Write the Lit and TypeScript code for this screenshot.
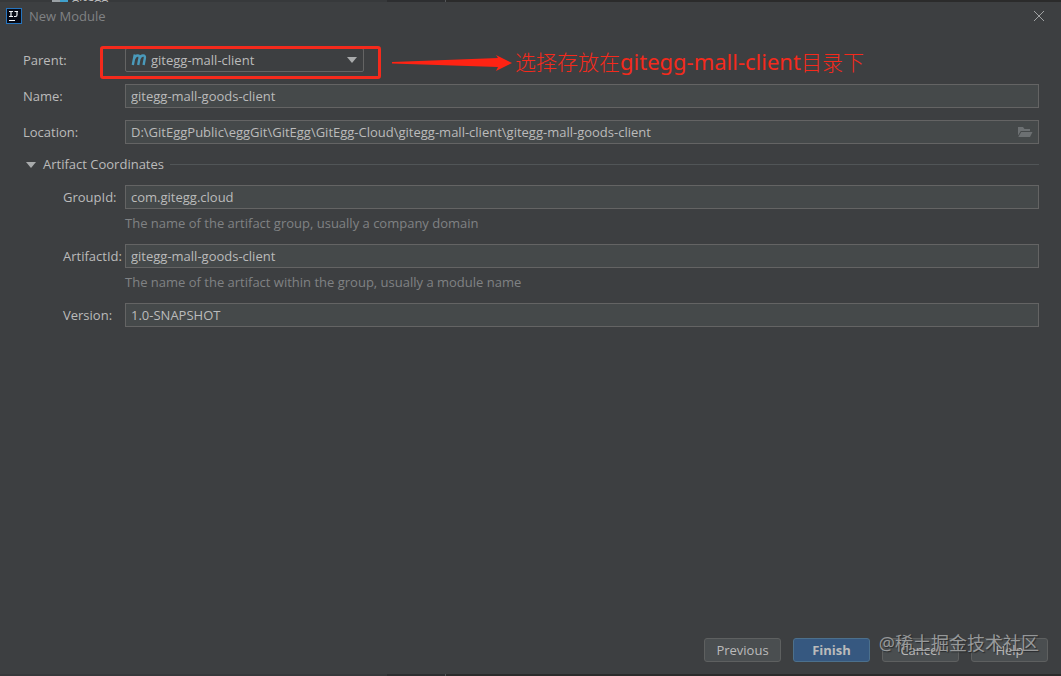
import { LitElement, html, css } from "lit";
import { customElement, property, state } from "lit/decorators.js";

@customElement("form-row")
class FormRow extends LitElement {
  @property() label = "";
  @property() value = "";
  @property() hint = "";
  @property({ type: Boolean }) nested = false;
  @property({ type: Boolean }) browse = false;

  static styles = css`
    :host { display: block; }
    .row { display: grid; grid-template-columns: 102px 1fr; align-items: center; }
    .nested { padding-left: 40px; grid-template-columns: 62px 1fr; }
    label { white-space: nowrap; }
    .field {
      display: flex; align-items: center; box-sizing: border-box; height: 24px;
      background: #45494a; border: 1px solid #646464;
    }
    input {
      flex: 1; min-width: 0; height: 22px; box-sizing: border-box; padding: 0 5px 1px; border: 0;
      outline: 0; background: none; color: #bbbbbb; font: inherit;
    }
    button { display: flex; padding: 0; margin-right: 5px; border: 0; background: none; }
    .hint { grid-column: 2; margin-top: 5px; padding-bottom: 1px; line-height: 18px; color: #808284; }
  `;

  render() {
    return html`
      <div class="row ${this.nested ? "nested" : ""}">
        <label for="field">${this.label}</label>
        <div class="field">
          <input id="field" type="text" spellcheck="false" .value=${this.value} />
          ${this.browse
            ? html`<button type="button" aria-label="Browse">
                <svg width="16" height="16" viewBox="0 0 16 16">
                  <path fill="#6c7072" d="M1 11.500V3h5l1.500 2H13v2H3.800z" />
                  <path fill="#6c7072" d="M4.200 8H15.500L13 13H1.300z" />
                </svg>
              </button>`
            : ""}
        </div>
        ${this.hint ? html`<div class="hint">${this.hint}</div>` : ""}
      </div>
    `;
  }
}

@customElement("app-root")
class AppRoot extends LitElement {
  @state() private expanded = true;

  static styles = css`
    :host {
      display: flex; flex-direction: column; min-height: 100vh; box-sizing: border-box;
      background: #3d3f41; color: #bbbbbb;
      font: 13px/18px "Open Sans", "Noto Sans CJK SC", sans-serif;
    }
    .edge { display: flex; height: 2px; overflow: hidden; background: #2b2b2b; }
    .edge-left { box-sizing: border-box; width: 42%; border-right: 1px solid #555759; background: linear-gradient(90deg, #37393b 87%, #2d2e30 87%); }
    .behind { display: flex; align-items: flex-end; height: 2px; padding-left: 52px; color: #bbbbbb; line-height: 11px; }
    .behind i { width: 8px; height: 2px; background: #9aa0a4; }
    .behind i + i { margin-right: 4px; background: #40a0cc; }
    .title { display: flex; align-items: center; height: 28px; padding: 0 16px 0 6px; gap: 7px; color: #808284; }
    .title h1 { flex: 1; margin: 0; font: inherit; }
    .title button { display: flex; padding: 0; border: 0; background: none; }
    main { display: flex; flex-direction: column; gap: 12px; flex: 1; padding: 18px 22px 0 23px; }
    .parent { display: grid; grid-template-columns: 102px 1fr; align-items: center; }
    .combo-area { position: relative; display: flex; }
    .combo {
      display: flex; align-items: center; box-sizing: border-box; width: 239px; height: 24px;
      padding: 0 6px 0 5px; border: 1px solid #646464; border-radius: 2px;
    }
    select {
      flex: 1; min-width: 0; margin-left: 4px; padding: 0; border: 0; outline: 0; appearance: none;
      background: none; color: #bbbbbb; font: inherit;
    }
    .mark { position: absolute; left: -25px; top: -2px; display: flex; align-items: center; white-space: nowrap; pointer-events: none; }
    .mark-box { box-sizing: border-box; width: 281px; height: 33px; border: 3px solid #f52a1c; border-radius: 3px; }
    .mark svg { margin-left: 11px; }
    .mark-text { margin-left: 2px; padding-bottom: 4px; color: #f52a1c; font: 300 21px/28px "Noto Sans CJK SC", sans-serif; }
    .mark-text span { font: 400 22px/28px "Noto Sans", sans-serif; }
    .section {
      display: flex; align-items: center; width: 100%; height: 17px; padding: 0 0 0 3px; border: 0;
      background: none; color: inherit; font: inherit;
    }
    .section span { margin: 0 6px 0 7px; padding-bottom: 1px; }
    .section i { flex: 1; height: 1px; background: #515557; }
    .group { display: flex; flex-direction: column; gap: 11px; }
    footer { position: relative; display: flex; justify-content: flex-end; gap: 12px; padding: 0 13px 12px; }
    footer button {
      width: 77px; height: 24px; padding: 0; border: 1px solid #5e6060; border-radius: 3px;
      background: #4a4e50; color: #bbbbbb; font: inherit;
    }
    footer .primary { border-color: #4c708c; background: #365880; font-weight: 700; }
    .watermark {
      position: absolute; right: 22px; top: -8px; color: #a5a7a8; font-size: 18px; line-height: 26px;
      text-shadow: 1px 1px 1px #222426; opacity: 0.85; pointer-events: none;
    }
  `;

  render() {
    return html`
      <div class="edge"><div class="edge-left"><div class="behind"><i></i><i></i>gitegg</div></div></div>
      <header class="title">
        <svg width="16" height="16" viewBox="0 0 16 16">
          <rect width="16" height="16" fill="#2675bf" />
          <rect x="1" y="1" width="14" height="14" fill="#080b16" />
          <path d="M3 3.500h4M5 3.500v5M3 8.500h4M8.500 3.500H12M11 3.500V7q0 1.500-1.500 1.500H8M3 12.500h6" fill="none" stroke="#f1f4f8" stroke-width="1.200" />
        </svg>
        <h1>New Module</h1>
        <button type="button" aria-label="Close">
          <svg width="12" height="12" viewBox="0 0 12 12"><path d="M1 1l10 10m0-10L1 11" stroke="#a0a2a3" /></svg>
        </button>
      </header>
      <main>
        <div class="parent">
          <label for="parent">Parent:</label>
          <div class="combo-area">
            <div class="combo">
              <svg width="16" height="16" viewBox="0 0 16 16">
                <path d="M1.800 13L3.800 2.500M3 7C3.800 4.600 5.200 3.500 6.600 3.500C8.400 3.500 8.800 4.600 8.400 6.500L7.200 13M8.300 7C9.200 4.600 10.600 3.500 12 3.500C13.800 3.500 14.200 4.600 13.800 6.500L12.600 13" fill="none" stroke="#4a9abb" stroke-width="2.400" />
              </svg>
              <select id="parent"><option>gitegg-mall-client</option></select>
              <svg width="10" height="6" viewBox="0 0 10 6"><path d="M0 0h10L5 6z" fill="#a9abac" /></svg>
            </div>
            <div class="mark">
              <div class="mark-box"></div>
              <svg width="121" height="18" viewBox="0 0 121 18">
                <path d="M0 8L106 4L104 1L120 9L104 17L106 13L0 9.500z" fill="#ff2313" />
              </svg>
              <div class="mark-text">选择存放在<span>gitegg-mall-client</span>目录下</div>
            </div>
          </div>
        </div>
        <form-row label="Name:" value="gitegg-mall-goods-client"></form-row>
        <form-row label="Location:" browse value="D:\\GitEggPublic\\eggGit\\GitEgg\\GitEgg-Cloud\\gitegg-mall-client\\gitegg-mall-goods-client"></form-row>
        <button class="section" type="button" aria-expanded=${this.expanded} @click=${() => (this.expanded = !this.expanded)}>
          <svg width="10" height="6" viewBox="0 0 10 6"><path d="M0 0h10L5 6z" fill="#a9abac" /></svg>
          <span>Artifact Coordinates</span><i></i>
        </button>
        ${this.expanded
          ? html`<div class="group">
              <form-row nested label="GroupId:" value="com.gitegg.cloud" hint="The name of the artifact group, usually a company domain"></form-row>
              <form-row nested label="ArtifactId:" value="gitegg-mall-goods-client" hint="The name of the artifact within the group, usually a module name"></form-row>
              <form-row nested label="Version:" value="1.0-SNAPSHOT"></form-row>
            </div>`
          : ""}
      </main>
      <footer>
        <button type="button">Previous</button>
        <button type="button" class="primary">Finish</button>
        <button type="button">Cancel</button>
        <button type="button">Help</button>
        <div class="watermark">@稀土掘金技术社区</div>
      </footer>
      <div class="edge"><div class="edge-left"></div></div>
    `;
  }
}
